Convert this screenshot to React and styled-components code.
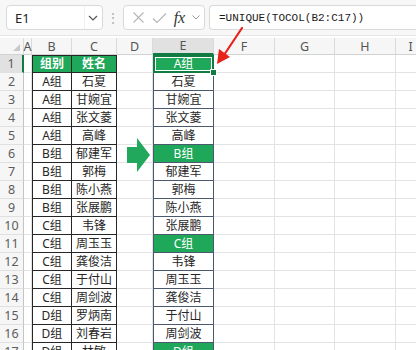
import React from 'react';
import styled, {createGlobalStyle} from 'styled-components';


const GlobalStyle = createGlobalStyle`
  html, body {
    margin: 0;
    padding: 0;
    background: #ffffff;
    overflow: hidden;
  }
  body {
    font-family: "Noto Sans", "Noto Sans CJK SC", sans-serif;
  }
`

const GREEN = '#1fa75a'
const SEL = '#107c41'
const GRID = '#e3e3e3'
const INK = '#262626'
const EDGE = '#4a5a6c'


const PageStl = styled.div`
  width: 416px;
  height: 350px;
  position: relative;
  overflow: hidden;
`

const ToolbarStl = styled.div`
  height: 36px;
  display: flex;
  align-items: center;
  gap: 0;
  padding: 0 0 0 6px;
  background: #f7f7f7;
  border-bottom: 1px solid #e6e6e6;
  box-sizing: border-box;
  margin-bottom: 2px;
`

const BoxStl = styled.div`
  height: 25px;
  display: flex;
  align-items: center;
  background: #ffffff;
  border: 1px solid #d9d9d9;
  border-radius: 4px;
  box-sizing: border-box;
`

const NameBoxStl = styled(BoxStl)`
  width: 97px;
  padding: 0 0 0 8px;
  justify-content: space-between;
  font-size: 13px;
  color: #222;
`

const NameDropStl = styled.div`
  width: 16px;
  height: 23px;
  display: flex;
  align-items: center;
  justify-content: center;
  margin-right: 1px;
  position: relative;
  border-left: 1px solid #f0f0f0;
`

const DotsStl = styled.div`
  width: 20px;
  text-align: center;
  color: #a8a8a8;
  font-size: 12px;
  line-height: 1;
`

const FxBoxStl = styled(BoxStl)`
  width: 82px;
  padding: 0 4px 0 8px;
  gap: 6px;
  justify-content: space-between;
`

const FxStl = styled.span`
  font-family: "Liberation Serif", "DejaVu Serif", serif;
  font-style: italic;
  font-size: 16px;
  color: #333;
  line-height: 1;
`

const FormulaBoxStl = styled(BoxStl)`
  flex: 1;
  margin-left: 4px;
  padding-left: 9px;
  border-right: none;
  border-radius: 4px 0 0 4px;
  font-family: "Liberation Mono", "DejaVu Sans Mono", monospace;
  font-size: 11px;
  color: #1a1a1a;
`

const SheetStl = styled.div`
  display: flex;
  align-items: flex-start;
`

const ColStl = styled.div`
  width: ${p => p.$w}px;
  flex-shrink: 0;
  display: flex;
  flex-direction: column;
`

const ColHeadStl = styled.div`
  height: 17px;
  box-sizing: border-box;
  display: flex;
  align-items: center;
  justify-content: center;
  font-size: 12.5px;
  color: #555;
  background: ${p => p.$active ? '#e1e1e1' : '#f6f6f6'};
  border-right: 1px solid #dadada;
  border-bottom: ${p => p.$active ? `2px solid ${SEL}` : '1px solid #d2d2d2'};
  position: relative;
`

const CornerMarkStl = styled.div`
  width: 0;
  height: 0;
  border-left: 7px solid transparent;
  border-bottom: 7px solid #c9c9c9;
  position: absolute;
  right: 3px;
  bottom: 3px;
`

const RowNumStl = styled.div`
  height: 18px;
  box-sizing: border-box;
  display: flex;
  align-items: center;
  justify-content: center;
  font-size: 12.5px;
  color: #5c5c5c;
  background: ${p => p.$active ? '#e1e1e1' : '#f6f6f6'};
  border-bottom: 1px solid #e0e0e0;
  border-right: ${p => p.$active ? `2px solid ${SEL}` : '1px solid #c4c4c4'};
`

const CellStl = styled.div`
  height: 18px;
  box-sizing: border-box;
  display: flex;
  align-items: center;
  justify-content: center;
  font-family: "Noto Sans", "Noto Sans CJK SC", sans-serif;
  font-size: 12px;
  line-height: 1;
  color: ${INK};
  border-right: 1px solid ${GRID};
  border-bottom: 1px solid ${GRID};
  background: #ffffff;
  white-space: nowrap;
  overflow: hidden;
`

const TableCellStl = styled(CellStl)`
  border-right: 1px solid ${INK};
  border-bottom: 1px solid ${INK};
  border-left: ${p => p.$first ? `1px solid ${INK}` : 'none'};
  border-top: ${p => p.$top ? `1px solid ${INK}` : 'none'};
  background: ${p => p.$head ? GREEN : '#ffffff'};
  color: ${p => p.$head ? '#ffffff' : INK};
  font-weight: ${p => p.$head ? 700 : 400};
`

const OutCellStl = styled(CellStl)`
  border-left: 1px solid ${EDGE};
  border-right: 1px solid ${EDGE};
  border-bottom: 1px solid ${EDGE};
  background: ${p => p.$group ? GREEN : '#ffffff'};
  color: ${p => p.$group ? '#ffffff' : INK};
  position: relative;
  overflow: visible;
`

const SelectedCellStl = styled(OutCellStl)`
  border: 2px solid ${SEL};
  box-shadow: inset 0 0 0 1px #ffffff;
`

const FillHandleStl = styled.div`
  width: 5px;
  height: 5px;
  background: ${SEL};
  border: 1px solid #ffffff;
  position: absolute;
  right: -5px;
  bottom: -5px;
  z-index: 2;
`

const OverlaySvgStl = styled.svg`
  position: absolute;
  left: 0;
  top: 0;
  pointer-events: none;
`


const table = [
  ['组别', '姓名'],
  ['A组', '石夏'], ['A组', '甘婉宜'], ['A组', '张文菱'], ['A组', '高峰'],
  ['B组', '郁建军'], ['B组', '郭梅'], ['B组', '陈小燕'], ['B组', '张展鹏'],
  ['C组', '韦锋'], ['C组', '周玉玉'], ['C组', '龚俊洁'], ['C组', '于付山'], ['C组', '周剑波'],
  ['D组', '罗炳南'], ['D组', '刘春岩'], ['D组', '林敏'],
]

const output = [
  'A组', '石夏', '甘婉宜', '张文菱', '高峰',
  'B组', '郁建军', '郭梅', '陈小燕', '张展鹏',
  'C组', '韦锋', '周玉玉', '龚俊洁', '于付山', '周剑波',
  'D组',
]

const rows = table.map((_, i) => i + 1)

const emptyCols = [
  {key: 'A', w: 8},
  {key: 'D', w: 36},
]

const rightCols = [
  {key: 'F', w: 61},
  {key: 'G', w: 60},
  {key: 'H', w: 61},
  {key: 'I', w: 30},
]


const Chevron = () => (
  <svg width="10" height="6" viewBox="0 0 10 6">
    <path d="M1 1 L5 5 L9 1" fill="none" stroke="#555" strokeWidth="1.2"/>
  </svg>
)


const EmptyCol = ({name, w}) => (
  <ColStl $w={w}>
    <ColHeadStl>{name}</ColHeadStl>
    {rows.map(r => <CellStl key={r}/>)}
  </ColStl>
)


export default function App() {
  return (
    <PageStl>
      <GlobalStyle/>

      <ToolbarStl>
        <NameBoxStl>
          E1
          <NameDropStl><Chevron/></NameDropStl>
        </NameBoxStl>
        <DotsStl>⋮</DotsStl>
        <FxBoxStl>
          <svg width="13" height="13" viewBox="0 0 13 13">
            <path d="M1.5 1.5 L11.5 11.5 M11.5 1.5 L1.5 11.5" stroke="#b5b5b5" strokeWidth="1.1"/>
          </svg>
          <svg width="15" height="12" viewBox="0 0 15 12">
            <path d="M1 6.5 L5 10.5 L14 1.5" fill="none" stroke="#b5b5b5" strokeWidth="1.1"/>
          </svg>
          <FxStl>fx</FxStl>
          <svg width="8" height="5" viewBox="0 0 8 5">
            <path d="M0.5 0.5 L4 4 L7.5 0.5" fill="none" stroke="#999" strokeWidth="1"/>
          </svg>
        </FxBoxStl>
        <FormulaBoxStl>=UNIQUE(TOCOL(B2:C17))</FormulaBoxStl>
      </ToolbarStl>

      <SheetStl>
        <ColStl $w={24}>
          <ColHeadStl><CornerMarkStl/></ColHeadStl>
          {rows.map(r => <RowNumStl key={r} $active={r === 1}>{r}</RowNumStl>)}
        </ColStl>

        <EmptyCol name="A" w={emptyCols[0].w}/>

        <ColStl $w={40}>
          <ColHeadStl>B</ColHeadStl>
          {table.map((row, i) => (
            <TableCellStl key={i} $first $top={i === 0} $head={i === 0}>{row[0]}</TableCellStl>
          ))}
        </ColStl>

        <ColStl $w={45}>
          <ColHeadStl>C</ColHeadStl>
          {table.map((row, i) => (
            <TableCellStl key={i} $top={i === 0} $head={i === 0}>{row[1]}</TableCellStl>
          ))}
        </ColStl>

        <EmptyCol name="D" w={emptyCols[1].w}/>

        <ColStl $w={61}>
          <ColHeadStl $active>E</ColHeadStl>
          {output.map((v, i) => {
            const group = v.endsWith('组')
            if (i === 0) {
              return (
                <SelectedCellStl key={i} $group>
                  {v}
                  <FillHandleStl/>
                </SelectedCellStl>
              )
            }
            return <OutCellStl key={i} $group={group}>{v}</OutCellStl>
          })}
        </ColStl>

        {rightCols.map(c => <EmptyCol key={c.key} name={c.key} w={c.w}/>)}
      </SheetStl>

      <OverlaySvgStl width="416" height="350" viewBox="0 0 416 350">
        {/* green block arrow between the tables */}
        <path d="M127 147 L137 147 L137 138 L150 155 L137 172 L137 163 L127 163 Z" fill="#22a85c"/>
        {/* red pointer to E1 */}
        <path d="M242 28 L224 55" stroke="#e8221b" strokeWidth="2.2" strokeLinecap="round"/>
        <path d="M217 64 L219 49 L230 57 Z" fill="#e8221b"/>
      </OverlaySvgStl>
    </PageStl>
  )
}
